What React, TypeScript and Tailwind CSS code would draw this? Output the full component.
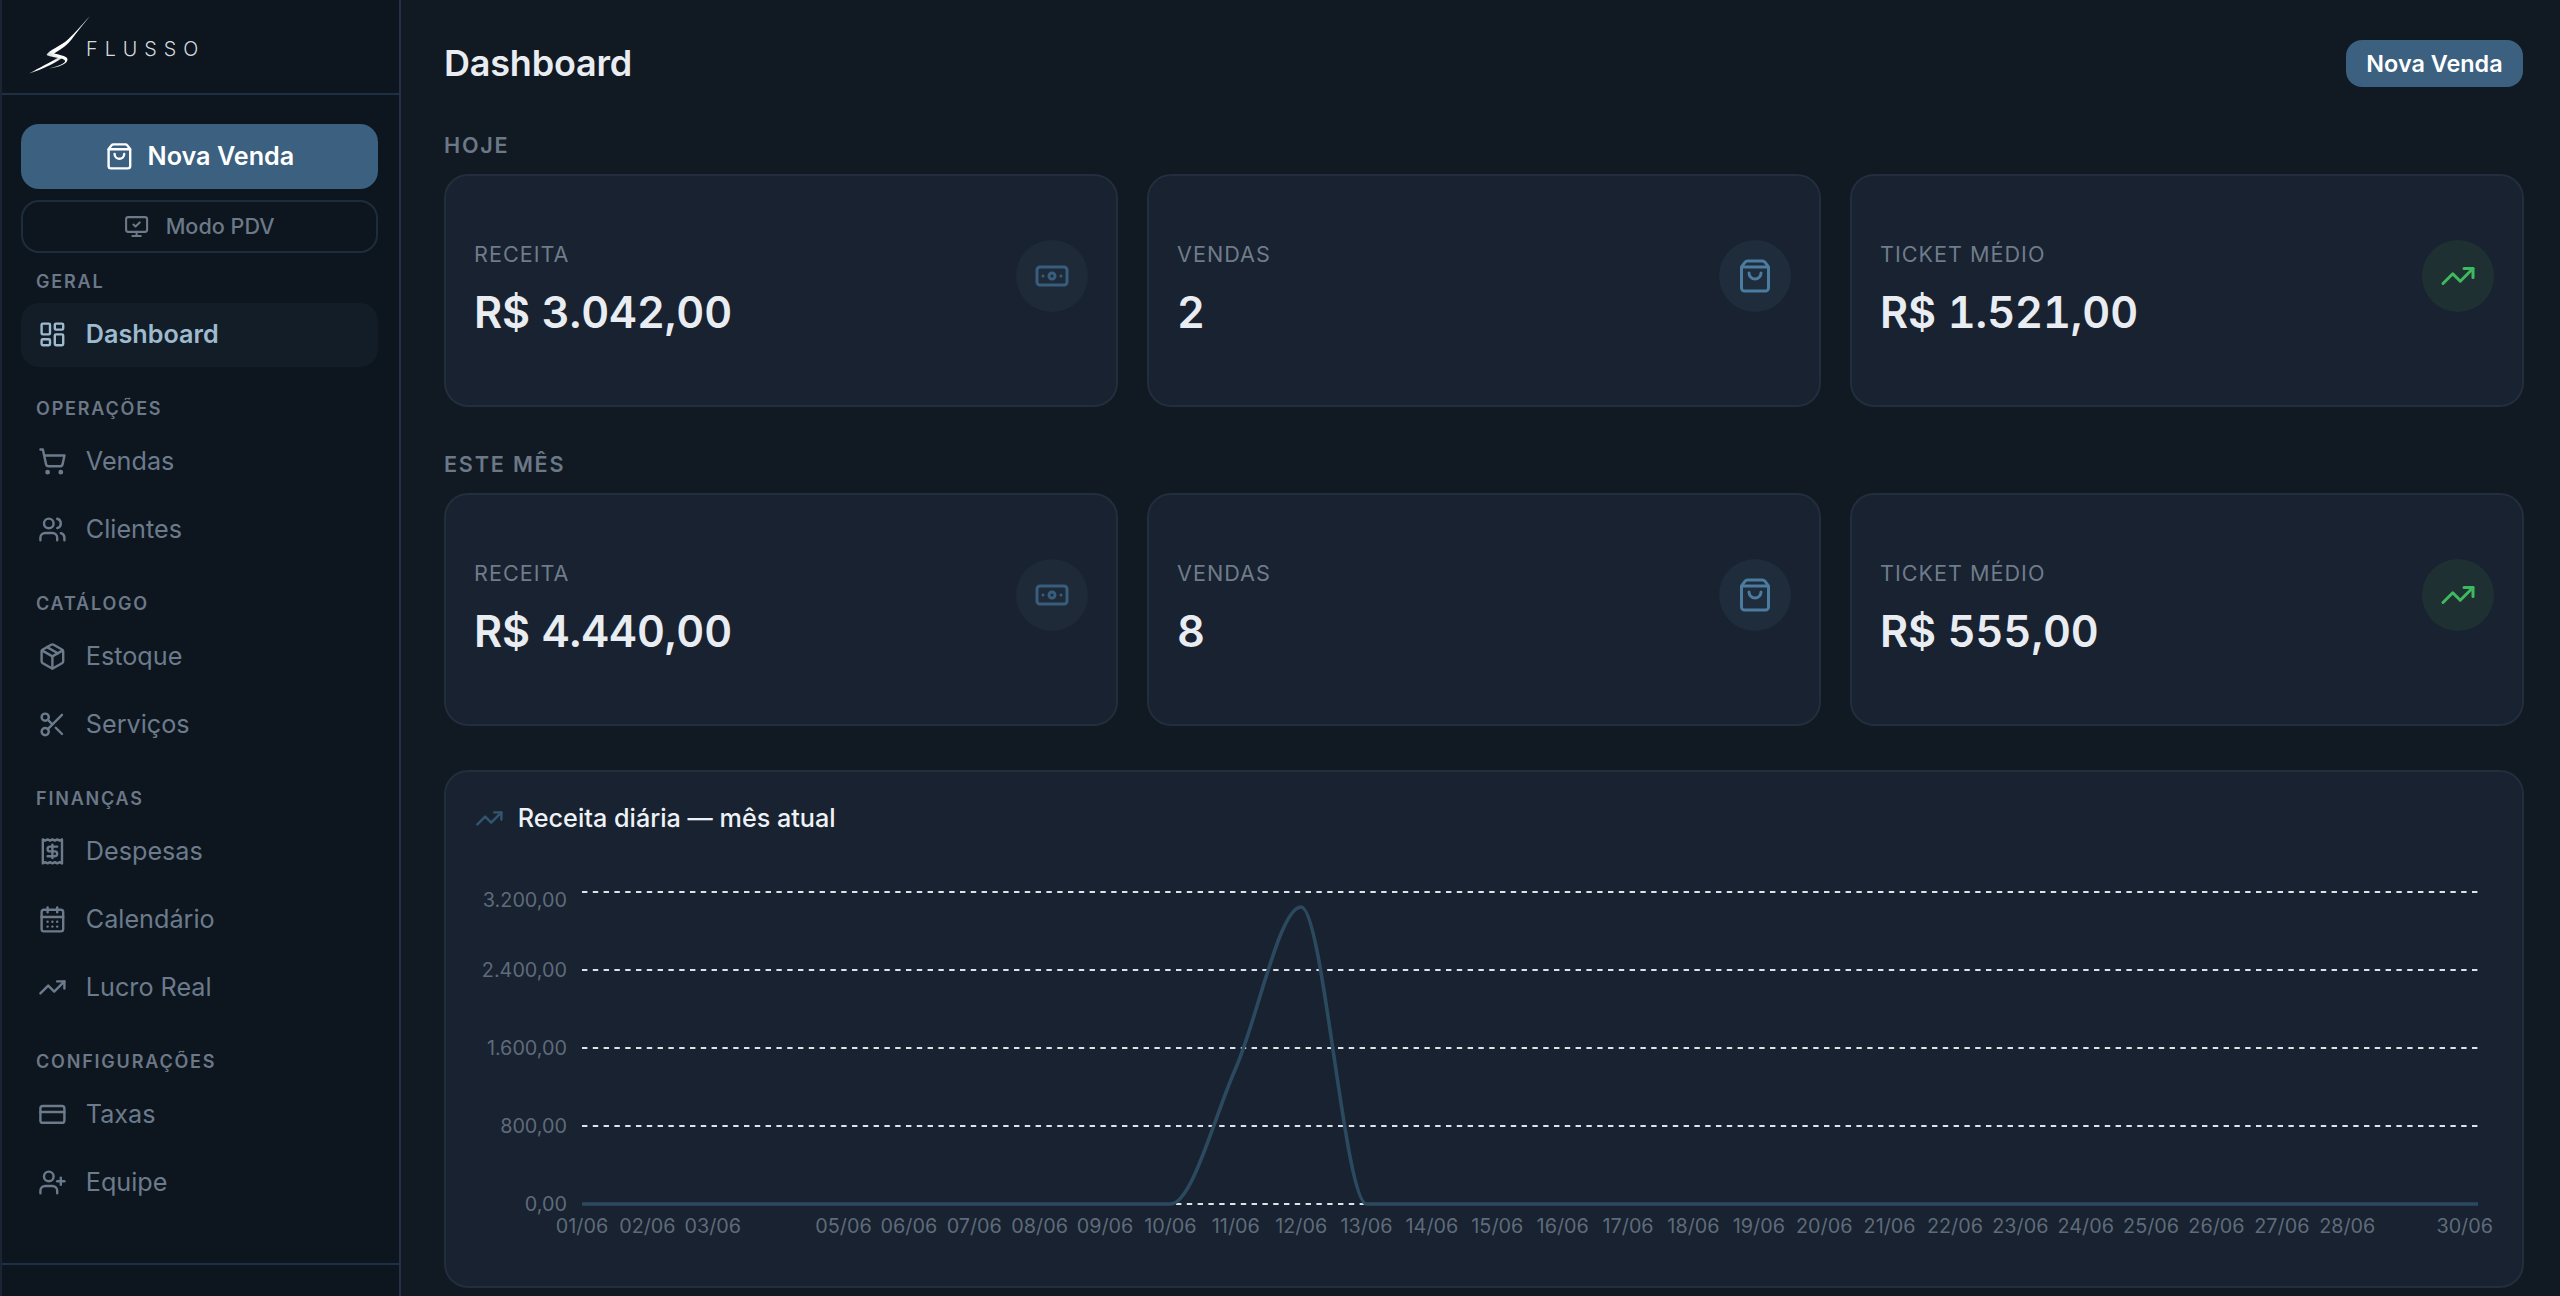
import {
  Banknote,
  CalendarDays,
  CreditCard,
  LayoutDashboard,
  MonitorCheck,
  Package,
  Receipt,
  Scissors,
  ShoppingBag,
  ShoppingCart,
  TrendingUp,
  UserPlus,
  Users,
} from "lucide-react"

const navGroups = [
  { title: "GERAL", items: [{ label: "Dashboard", icon: LayoutDashboard, active: true }] },
  {
    title: "OPERAÇÕES",
    items: [
      { label: "Vendas", icon: ShoppingCart },
      { label: "Clientes", icon: Users },
    ],
  },
  {
    title: "CATÁLOGO",
    items: [
      { label: "Estoque", icon: Package },
      { label: "Serviços", icon: Scissors },
    ],
  },
  {
    title: "FINANÇAS",
    items: [
      { label: "Despesas", icon: Receipt },
      { label: "Calendário", icon: CalendarDays },
      { label: "Lucro Real", icon: TrendingUp },
    ],
  },
  {
    title: "CONFIGURAÇÕES",
    items: [
      { label: "Taxas", icon: CreditCard },
      { label: "Equipe", icon: UserPlus },
    ],
  },
]

const Logo = () => (
  <svg width="62" height="60" viewBox="0 0 62 60" className="shrink-0">
    <defs>
      <linearGradient id="bolt" x1="1" y1="0" x2="0" y2="1">
        <stop offset="0" stopColor="#ffffff" stopOpacity="0.75" />
        <stop offset="0.3" stopColor="#ffffff" />
        <stop offset="0.75" stopColor="#ffffff" />
        <stop offset="1" stopColor="#ffffff" stopOpacity="0.6" />
      </linearGradient>
    </defs>
    <path
      d="M61 0 C52 9.5 44 19.5 36 26 C30 30 22 34 19 37 C16.5 39 18 39.5 22 40.5 C28 42 34 42 36 44.5 C37 47 30 50 20 52.5 C29 51.5 38.5 48 38.5 43.5 C38.5 40 31 39 25 37.5 C33 33 38.5 28.5 42.5 23.5 C48.5 15.5 54.5 8 61 0 Z"
      fill="url(#bolt)"
    />
    <path d="M30 41 C22 46 10 52 0 57.5 C10 54.5 24 48.5 33 42 Z" fill="url(#bolt)" />
  </svg>
)

const Sidebar = () => (
  <aside className="flex h-full w-[401px] shrink-0 flex-col border-x-2 border-l-[#1a2533] border-r-[#233244] bg-[#0d151e]">
    <div className="flex h-[95px] shrink-0 items-start border-b-2 border-[#203044] pl-[27px] pt-[16px]">
      <Logo />
      <span className="mt-[19px] -ml-[5px] text-[19.8px] leading-[28px] font-light tracking-[7px] text-[#d5d9dd]">
        FLUSSO
      </span>
    </div>

    <div className="flex min-h-0 flex-1 flex-col pl-[19px] pr-[21px] pt-[29px]">
      <button className="flex h-[65px] shrink-0 items-center justify-center gap-[14px] rounded-[18px] bg-[#3b6080] text-[25.2px] font-semibold text-white">
        <ShoppingBag className="size-[28.8px]" />
        Nova Venda
      </button>
      <button className="mt-[11px] flex h-[53px] shrink-0 items-center justify-center gap-[16px] rounded-[18px] border-2 border-[#1e2d3e] text-[21.6px] font-medium text-[#6b7988]">
        <MonitorCheck className="size-[25.2px]" />
        Modo PDV
      </button>

      <nav className="mt-[15px] flex flex-col gap-[28.5px]">
        {navGroups.map((group) => (
          <div key={group.title} className="flex flex-col">
            <div className="mb-[7.5px] h-[27px] pl-[15px] text-[18px] leading-[27px] font-semibold tracking-[1.8px] text-[#6b7888]">
              {group.title}
            </div>
            <div className="flex flex-col gap-[4px]">
              {group.items.map((item) => {
                const Icon = item.icon
                return (
                  <a
                    key={item.label}
                    className={
                      item.active
                        ? "flex h-[64px] items-center gap-[19px] rounded-[18px] bg-[#121d28] px-[17px] text-[25.2px] font-semibold text-[#9dbace]"
                        : "flex h-[64px] items-center gap-[19px] rounded-[18px] px-[17px] text-[25.2px] text-[#6c7b8c]"
                    }
                  >
                    <Icon className="size-[28.8px] shrink-0" />
                    {item.label}
                  </a>
                )
              })}
            </div>
          </div>
        ))}
      </nav>
    </div>

    <div className="h-[33px] shrink-0 border-t-2 border-[#203044]" />
  </aside>
)

type StatProps = {
  label: string
  value: string
  icon: typeof Banknote
  circle: string
  tint: string
}

const StatCard = ({ label, value, icon: Icon, circle, tint }: StatProps) => (
  <div className="flex h-[233px] items-center justify-between rounded-[24px] border-2 border-[#222e3d] bg-[#182230] px-[28px]">
    <div className="flex flex-col">
      <div className="text-[21.6px] leading-[29px] tracking-[1px] text-[#6f7c8b]">{label}</div>
      <div className="mt-[15px] text-[43.2px] leading-[57.6px] font-semibold tabular-nums tracking-[-0.05px] text-[#e9edf2]">{value}</div>
    </div>
    <div className={`-mt-[29px] flex size-[72px] items-center justify-center rounded-full ${circle}`}>
      <Icon className={`size-[36px] ${tint}`} />
    </div>
  </div>
)

const statsRow = (receita: string, vendas: string, ticket: string) => (
  <div className="grid grid-cols-3 gap-[29px]">
    <StatCard label="RECEITA" value={receita} icon={Banknote} circle="bg-[#1e2a38]" tint="text-[#395d7d]" />
    <StatCard label="VENDAS" value={vendas} icon={ShoppingBag} circle="bg-[#1e2c3b]" tint="text-[#4b7b9f]" />
    <StatCard label="TICKET MÉDIO" value={ticket} icon={TrendingUp} circle="bg-[#1f3033]" tint="text-[#3fb95f]" />
  </div>
)

// chart is drawn 1:1, svg origin sits at page (475, 860)
const originX = 475
const originY = 860
const plotLeft = 582 - originX
const plotRight = 2478 - originX
const step = (plotRight - plotLeft) / 29
const gridYs = [892, 970, 1048, 1126, 1204].map((y) => y - originY)
const yLabels = [
  { text: "3.200,00", y: 900 },
  { text: "2.400,00", y: 970 },
  { text: "1.600,00", y: 1048 },
  { text: "800,00", y: 1126 },
  { text: "0,00", y: 1204 },
]
const days = Array.from({ length: 28 }, (_, i) => i + 1).filter((d) => d !== 4)

const x = (day: number) => plotLeft + (day - 1) * step
const base = gridYs[4]
const p11 = 1068 - originY
const p12 = 907 - originY
const h = step / 3
const linePath = `M${plotLeft} ${base} L${x(10)} ${base}
  C${x(10) + h} ${base} ${x(11) - h} ${p11 + 2.27 * h} ${x(11)} ${p11}
  C${x(11) + h} ${p11 - 2.27 * h} ${x(12) - h} ${p12} ${x(12)} ${p12}
  C${x(12) + h} ${p12} ${x(13) - h} ${base} ${x(13)} ${base}
  L${plotRight} ${base}`

const RevenueChart = () => (
  <svg
    width="2018"
    height="390"
    viewBox="0 0 2018 390"
    className="block overflow-visible"
    style={{ fontFamily: "Inter, sans-serif" }}
  >
    {gridYs.map((y) => (
      <line key={y} x1={plotLeft} x2={plotRight} y1={y} y2={y} stroke="#dfe3e8" strokeWidth="1.8" strokeDasharray="5.4 5.4" />
    ))}
    {yLabels.map((t) => (
      <text key={t.text} x={567 - originX} y={t.y - originY + 7} textAnchor="end" fontSize="19.8" fill="#5f6b7a">
        {t.text}
      </text>
    ))}
    {days.map((d) => (
      <text key={d} x={x(d)} y={1233 - originY} textAnchor="middle" fontSize="19.8" fill="#5f6b7a">
        {String(d).padStart(2, "0")}/06
      </text>
    ))}
    <text x={2493 - originX} y={1233 - originY} textAnchor="end" fontSize="19.8" fill="#5f6b7a">
      30/06
    </text>
    <path d={linePath} fill="none" stroke="#2c4a5f" strokeWidth="3.6" />
  </svg>
)

const App = () => {
  return (
    <div className="flex h-screen overflow-hidden bg-[#111922] font-['Inter',sans-serif]">
      <Sidebar />
      <main className="flex min-w-0 flex-1 flex-col pl-[43px] pr-[36px]">
        <div className="flex h-[127px] shrink-0 items-start justify-between pt-[40px]">
          <h1 className="text-[36px] leading-[47px] font-semibold tracking-[-0.2px] text-[#e9edf2]">Dashboard</h1>
          <button className="mr-[1px] flex h-[47px] w-[177px] items-center justify-center rounded-[16px] bg-[#3b6080] text-[23.4px] font-semibold text-white">
            Nova Venda
          </button>
        </div>

        <div className="mb-[3px] h-[44px] text-[21.6px] leading-[36px] font-semibold tracking-[1.8px] text-[#6b7888]">HOJE</div>
        {statsRow("R$ 3.042,00", "2", "R$ 1.521,00")}

        <div className="mb-[3px] mt-[39px] h-[44px] text-[21.6px] leading-[36px] font-semibold tracking-[1.8px] text-[#6b7888]">ESTE MÊS</div>
        {statsRow("R$ 4.440,00", "8", "R$ 555,00")}

        <section className="mt-[43.5px] h-[518px] shrink-0 rounded-[24px] border-2 border-[#222e3d] bg-[#182230] px-[29px] pt-[29px]">
          <div className="flex h-[36px] items-center gap-[14px] text-[25.2px] font-medium text-[#eef2f6]">
            <TrendingUp className="size-[28.8px] text-[#33556f]" />
            Receita diária — mês atual
          </div>
          <div className="mt-[23.5px]">
            <RevenueChart />
          </div>
        </section>
      </main>
    </div>
  )
}

export default App
